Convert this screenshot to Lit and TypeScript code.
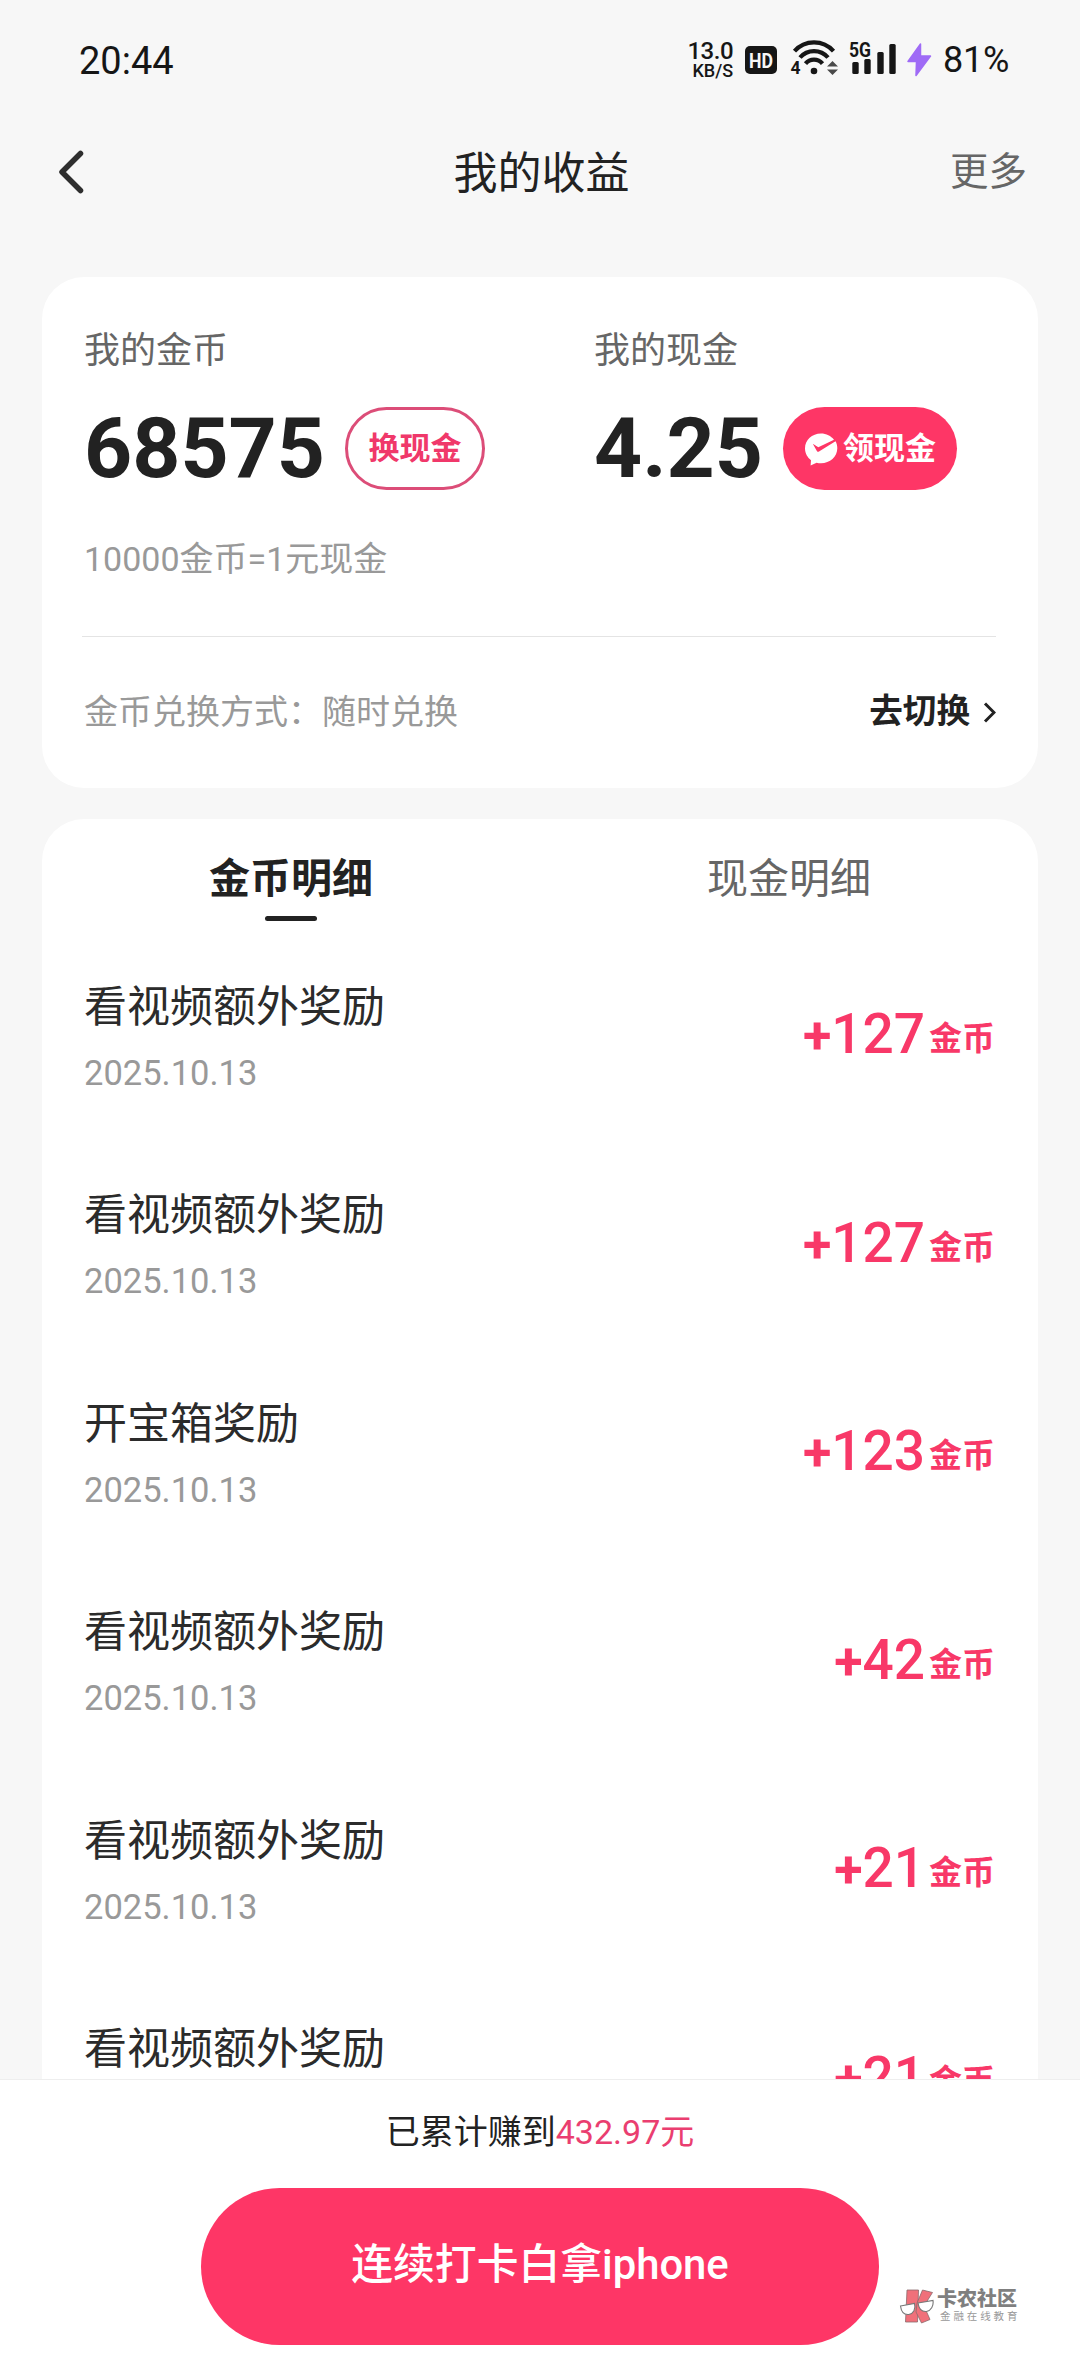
import { LitElement, html, css, svg, nothing } from "lit";
import { customElement, property } from "lit/decorators.js";

interface Reward {
  title: string;
  date?: string;
  amount: number;
}

const REWARDS: Reward[] = [
  { title: "看视频额外奖励", date: "2025.10.13", amount: 127 },
  { title: "看视频额外奖励", date: "2025.10.13", amount: 127 },
  { title: "开宝箱奖励", date: "2025.10.13", amount: 123 },
  { title: "看视频额外奖励", date: "2025.10.13", amount: 42 },
  { title: "看视频额外奖励", date: "2025.10.13", amount: 21 },
  { title: "看视频额外奖励", amount: 21 },
];

const SIGNAL_BARS = [
  { x: 3, top: 21 },
  { x: 15, top: 18 },
  { x: 28, top: 11 },
  { x: 40, top: 3 },
];

@customElement("status-bar")
export class StatusBar extends LitElement {
  static styles = css`
    :host {
      display: flex;
      justify-content: space-between;
      height: 120px;
      padding: 0 71px 0 79px;
      box-sizing: border-box;
      color: #161616;
      font-family: Roboto, "Noto Sans CJK SC", sans-serif;
    }
    .clock {
      font-size: 38px;
      line-height: 44px;
      padding-top: 39px;
    }
    .tray {
      display: flex;
      align-items: flex-start;
      padding-top: 38px;
    }
    .speed {
      display: flex;
      flex-direction: column;
      align-items: flex-end;
      width: 46px;
      margin-right: 12px;
      padding-top: 3px;
      font-weight: 500;
      white-space: nowrap;
    }
    .rate {
      font-size: 24px;
      line-height: 21px;
      letter-spacing: -0.5px;
    }
    .unit {
      font-size: 18px;
      line-height: 18px;
    }
    .icon {
      display: block;
      flex: none;
    }
    .hd {
      margin-right: 12px;
    }
    .wifi {
      margin-right: 11px;
    }
    .signal {
      margin-right: 8px;
    }
    .bolt {
      margin-right: 11px;
    }
    .battery {
      font-size: 36px;
      line-height: 44px;
      letter-spacing: -0.3px;
    }
  `;

  render() {
    return html`
      <div class="clock">20:44</div>
      <div class="tray">
        <div class="speed">
          <span class="rate">13.0</span>
          <span class="unit">KB/S</span>
        </div>
        <svg class="icon hd" width="33" height="40" viewBox="0 0 33 40">
          <rect x="0" y="8" width="32" height="28" rx="5" fill="#161616" />
          <text
            x="16"
            y="29.5"
            text-anchor="middle"
            font-size="21"
            font-weight="700"
            textLength="24"
            lengthAdjust="spacingAndGlyphs"
            fill="#f7f7f7"
          >HD</text>
        </svg>
        <svg class="icon wifi" width="48" height="40" viewBox="0 0 48 40">
          <g fill="none" stroke="#161616" stroke-width="4.2">
            <path d="M4.5 13.2A26 26 0 0 1 43.5 13.2" />
            <path d="M10 19.5A18.5 18.5 0 0 1 38 19.5" />
            <path d="M15.5 25.6A11 11 0 0 1 32.500 25.6" />
          </g>
          <circle cx="24" cy="33" r="3.3" fill="#161616" />
          <text x="0.5" y="36" font-size="17.5" font-weight="700" fill="#161616">4</text>
          <path d="M37 28.5L42.5 23L48 28.5Z M37 31.5L42.5 37L48 31.5Z" fill="#4a4a4a" />
        </svg>
        <svg class="icon signal" width="49" height="40" viewBox="0 0 49 40">
          <text
            x="0"
            y="19"
            font-size="20"
            font-weight="700"
            textLength="22"
            lengthAdjust="spacingAndGlyphs"
            fill="#161616"
          >5G</text>
          ${SIGNAL_BARS.map(
            (b) => svg`<rect x=${b.x + 0.3} y=${b.top + 3} width="6.4" height=${33 - b.top} rx="1.5" fill="#161616" />`,
          )}
        </svg>
        <svg class="icon bolt" width="26" height="40" viewBox="0 0 26 40">
          <path
            d="M14.5 6L2 23.5H10.5L10 37.5L24.5 18H14.5Z"
            fill="#9f6bf6"
            stroke="#9f6bf6"
            stroke-width="1.5"
            stroke-linejoin="round"
          />
        </svg>
        <span class="battery">81%</span>
      </div>
    `;
  }
}

@customElement("reward-row")
export class RewardRow extends LitElement {
  @property() name = "";
  @property() date?: string;
  @property({ type: Number }) amount = 0;

  static styles = css`
    :host {
      display: flex;
      justify-content: space-between;
      align-items: flex-start;
      height: 208.6px;
      padding: 0 43px 0 42px;
      box-sizing: border-box;
    }
    .name {
      padding-top: 1.5px;
      font-size: 43px;
      line-height: 60px;
      color: #2b2b2b;
    }
    .date {
      margin-top: 11px;
      font-size: 34.5px;
      line-height: 50px;
      color: #999;
    }
    .amount {
      display: flex;
      align-items: baseline;
      padding-top: 26px;
      line-height: 66px;
      color: #f83868;
      font-weight: 500;
    }
    .sign {
      font-size: 52px;
      font-weight: 700;
    }
    .value {
      font-size: 55px;
    }
    .unit {
      margin: 0 0 3px 4px;
      font-size: 33px;
      font-weight: 700;
      transform: translateY(-3px);
    }
  `;

  render() {
    return html`
      <div>
        <div class="name">${this.name}</div>
        ${this.date ? html`<div class="date">${this.date}</div>` : nothing}
      </div>
      <div class="amount">
        <span class="sign">+</span><span class="value">${this.amount}</span><span class="unit">金币</span>
      </div>
    `;
  }
}

@customElement("app-root")
export class AppRoot extends LitElement {
  static styles = css`
    :host {
      display: flex;
      flex-direction: column;
      width: 1080px;
      height: 2376px;
      overflow: hidden;
      background: #f7f7f7;
      color: #222;
      font-family: Roboto, "Noto Sans CJK SC", sans-serif;
    }
    .header {
      display: grid;
      grid-template-columns: 1fr auto 1fr;
      align-items: center;
      height: 104px;
      margin-bottom: 53px;
      padding: 0 53px 0 56px;
      flex: none;
    }
    .back {
      display: block;
    }
    .title {
      padding-top: 3px;
      font-size: 44px;
      line-height: 60px;
    }
    .more {
      justify-self: end;
      font-size: 38.5px;
      line-height: 56px;
      color: #666;
    }
    .card {
      margin: 0 42px;
      background: #fff;
      border-radius: 42px;
    }
    .wallet {
      flex: none;
      height: 511px;
      margin-bottom: 31px;
      padding: 0 42px;
      box-sizing: border-box;
    }
    .balances {
      display: grid;
      grid-template-columns: 510px 1fr;
      padding-top: 48px;
    }
    .label {
      font-size: 36px;
      line-height: 52px;
      color: #666;
    }
    .figure {
      display: flex;
      align-items: center;
      height: 83px;
      margin-top: 30px;
    }
    .number {
      font-size: 84px;
      font-weight: 700;
      line-height: 84px;
    }
    .pill {
      display: flex;
      align-items: center;
      justify-content: center;
      height: 83px;
      box-sizing: border-box;
      border-radius: 42px;
      font-size: 31px;
      font-weight: 700;
      line-height: 44px;
    }
    .pill span {
      padding-top: 1px;
    }
    .pill-outline {
      width: 140px;
      margin-left: 20px;
      border: 3px solid #dc4d78;
      color: #f0386a;
    }
    .pill-solid {
      width: 174px;
      margin-left: 20px;
      gap: 5px;
      background: #fe3666;
      color: #fff;
    }
    .rule {
      margin-top: 44px;
      font-size: 34px;
      line-height: 50px;
      color: #999;
    }
    .divider {
      height: 1px;
      margin: 52px 0 0 -2px;
      background: #e4e4e4;
    }
    .exchange {
      display: flex;
      justify-content: space-between;
      align-items: center;
      height: 149px;
      padding-right: 0;
      font-size: 34px;
      line-height: 50px;
      color: #999;
    }
    .switch {
      display: flex;
      align-items: center;
      gap: 12px;
      font-size: 33.6px;
      font-weight: 700;
      color: #222;
    }
    .history {
      flex: 1;
      min-height: 0;
      overflow: hidden;
      border-radius: 42px 42px 0 0;
    }
    .tabs {
      display: grid;
      grid-template-columns: 1fr 1fr;
      height: 156px;
    }
    .tab {
      display: flex;
      flex-direction: column;
      align-items: center;
      padding-top: 31px;
      font-size: 41px;
      line-height: 58px;
      color: #666;
    }
    .tab-active {
      font-weight: 700;
      color: #222;
    }
    .tab-active::after {
      content: "";
      width: 52px;
      height: 5px;
      margin-top: 8px;
      border-radius: 3px;
      background: #222;
    }
    .footer {
      position: relative;
      flex: none;
      display: flex;
      flex-direction: column;
      align-items: center;
      height: 297px;
      box-sizing: border-box;
      border-top: 1px solid #eee;
      background: #fff;
    }
    .total {
      margin-top: 27px;
      font-size: 34px;
      line-height: 50px;
      color: #222;
    }
    .sum {
      color: #ea3e70;
    }
    .cta {
      display: flex;
      align-items: center;
      justify-content: center;
      width: 678px;
      height: 157px;
      margin-top: 31px;
      padding-bottom: 3px;
      box-sizing: border-box;
      border-radius: 79px;
      background: #fe3666;
      color: #fff;
      font-size: 41.8px;
      font-weight: 500;
      line-height: 60px;
    }
    .mark {
      position: absolute;
      left: 899px;
      top: 208px;
      display: flex;
      gap: 3px;
    }
    .mark-name {
      font-size: 20px;
      line-height: 22px;
      font-weight: 900;
      color: #7f7f7f;
      white-space: nowrap;
    }
    .mark-sub {
      padding-left: 3px;
      font-size: 10.5px;
      line-height: 14px;
      letter-spacing: 2.9px;
      color: #999;
      white-space: nowrap;
    }
  `;

  render() {
    return html`
      <status-bar></status-bar>
      <header class="header">
        <svg class="back" width="30" height="50" viewBox="0 0 30 50">
          <path d="M24.5 6.5L6 25L24.5 43.5" fill="none" stroke="#2e2e2e" stroke-width="5.5" stroke-linecap="round" stroke-linejoin="round" />
        </svg>
        <div class="title">我的收益</div>
        <div class="more">更多</div>
      </header>

      <section class="card wallet">
        <div class="balances">
          <div>
            <div class="label">我的金币</div>
            <div class="figure">
              <span class="number">68575</span>
              <div class="pill pill-outline"><span>换现金</span></div>
            </div>
          </div>
          <div>
            <div class="label">我的现金</div>
            <div class="figure">
              <span class="number">4.25</span>
              <div class="pill pill-solid">
                <svg width="34" height="34" viewBox="0 0 34 34">
                  <path
                    d="M17 1.5C8 1.5 1 8 1 16.3C1 21.5 3.500 25.5 7 28.2L6.6 33.5L12.6 30.7C14 31.1 15.500 31.3 17 31.3C26 31.3 33.3 24.8 33.3 16.3C33.3 13.700 32.700 11.4 31.5 9.3L15 19.6C14.3 20 13.500 19.9 13 19.2L8.800 11.8L14.3 15.3L30 7.700C27 4 22.3 1.5 17 1.5Z"
                    fill="#fff"
                  />
                </svg>
                <span>领现金</span>
              </div>
            </div>
          </div>
        </div>
        <div class="rule">10000金币=1元现金</div>
        <div class="divider"></div>
        <div class="exchange">
          <span>金币兑换方式：随时兑换</span>
          <span class="switch">
            去切换
            <svg width="14" height="24" viewBox="0 0 14 24">
              <path d="M3 3.5L12 12.500L3 21.5" fill="none" stroke="#222" stroke-width="3" />
            </svg>
          </span>
        </div>
      </section>

      <section class="card history">
        <div class="tabs">
          <div class="tab tab-active">金币明细</div>
          <div class="tab">现金明细</div>
        </div>
        ${REWARDS.map(
          (r) => html`<reward-row .name=${r.title} .date=${r.date} .amount=${r.amount}></reward-row>`,
        )}
      </section>

      <footer class="footer">
        <div class="total">已累计赚到<span class="sum">432.97元</span></div>
        <div class="cta">连续打卡白拿iphone</div>
        <div class="mark">
          <svg width="35" height="38" viewBox="0 0 35 38">
            <g fill="#f0707a" stroke="#8a6a6c" stroke-width="0.8">
              <path d="M8 2H19.500L18.5 34H6.500Z" />
              <path d="M18 15L23.500 2L33.5 4.5L25 18L31 31.5L22.5 35L17 24Z" />
            </g>
            <g fill="#fff" stroke="#777" stroke-width="1.1">
              <path d="M1.5 18L15.5 15.500C17 21 14.500 25.700 9.8 26.5C5 27 2.200 23.5 1.5 18Z" />
              <path d="M19 15L34 12.5C34.800 18 32 22.800 27.500 23.5C22.500 24 19.800 20 19 15Z" />
            </g>
          </svg>
          <div>
            <div class="mark-name">卡农社区</div>
            <div class="mark-sub">金融在线教育</div>
          </div>
        </div>
      </footer>
    `;
  }
}
